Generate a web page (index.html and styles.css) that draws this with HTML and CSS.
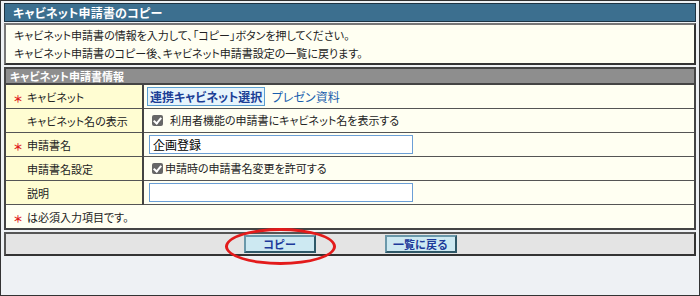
FILE: index.html
```html
<!DOCTYPE html>
<html lang="ja">
<head>
    <meta charset="UTF-8">
    <meta name="viewport" content="width=device-width, initial-scale=1.0">
    <title>キャビネット申請書のコピー</title>
    <link rel="stylesheet" href="styles.css">
</head>
<body>
    <div class="frame">
        <div class="title-bar">キャビネット申請書のコピー</div>
        <div class="desc">
            <p>キャビネット申請書の情報を入力して、「コピー」ボタンを押してください。</p>
            <p>キャビネット申請書のコピー後、キャビネット申請書設定の一覧に戻ります。</p>
        </div>
        <table class="form-table">
            <tr>
                <th class="section-head" colspan="2">キャビネット申請書情報</th>
            </tr>
            <tr>
                <td class="label"><span class="req">＊</span>キャビネット</td>
                <td class="value">
                    <span class="pick-btn">連携キャビネット選択</span>
                    <a class="link" href="#">プレゼン資料</a>
                </td>
            </tr>
            <tr>
                <td class="label"><span class="req"></span>キャビネット名の表示</td>
                <td class="value">
                    <label class="check"><span class="box"></span>利用者機能の申請書にキャビネット名を表示する</label>
                </td>
            </tr>
            <tr>
                <td class="label"><span class="req">＊</span>申請書名</td>
                <td class="value"><input class="text" type="text" value="企画登録"></td>
            </tr>
            <tr>
                <td class="label"><span class="req"></span>申請書名設定</td>
                <td class="value">
                    <label class="check tight"><span class="box"></span>申請時の申請書名変更を許可する</label>
                </td>
            </tr>
            <tr>
                <td class="label"><span class="req"></span>説明</td>
                <td class="value"><input class="text" type="text" value=""></td>
            </tr>
            <tr>
                <td class="note" colspan="2"><span class="req">＊</span>は必須入力項目です。</td>
            </tr>
        </table>
        <div class="btn-bar">
            <span class="btn-wrap">
                <button class="btn">コピー</button>
                <span class="ring"></span>
            </span>
            <button class="btn">一覧に戻る</button>
        </div>
    </div>
</body>
</html>
```

FILE: styles.css
```css
body {
    margin: 0;
    font-family: "Noto Sans CJK JP", "Liberation Sans", sans-serif;
    font-feature-settings: "palt";
    font-size: 11px;
    color: #222;
}
.frame {
    width: 700px;
    height: 296px;
    box-sizing: border-box;
    border: 1px solid #333;
    background: #eef1f4;
    padding: 2px 3px 0 3px;
}
.title-bar {
    height: 17px;
    line-height: 17px;
    background: #3c6f8f;
    border: 1px solid #1d3342;
    color: white;
    font-size: 12px;
    font-weight: bold;
    padding-left: 8px;
    letter-spacing: 0.2px;
}
.desc {
    margin-top: 1px;
    height: 37px;
    background: #fffff2;
    border: 2px solid #555;
    border-color: #777 #333 #333 #777;
    padding: 1px 0 0 8px;
}
.desc p {
    margin: 0;
    line-height: 18px;
}
.form-table {
    margin-top: 2px;
    width: 100%;
    border-collapse: collapse;
    background: #fffff2;
    border: 2px solid #444;
}
.section-head {
    height: 14px;
    padding: 0 0 0 4px;
    background: #8e8e8e;
    color: white;
    font-weight: bold;
    font-size: 11px;
    text-align: left;
    line-height: 14px;
    border-bottom: 2px solid #444;
}
.form-table td {
    border: 1px solid #555;
    height: 23px;
    padding: 0;
}
.label {
    width: 136px;
    background: #fffdd2;
    border-right: 2px solid #444 !important;
}
.req {
    display: inline-block;
    width: 21px;
    padding-left: 8px;
    box-sizing: border-box;
    color: #e02020;
    font-weight: bold;
    font-size: 10px;
    line-height: 11px;
    vertical-align: middle;
}
.value {
    padding-left: 3px !important;
}
.pick-btn {
    display: inline-block;
    padding: 0 2px;
    height: 17px;
    line-height: 17px;
    background: #e6f4fc;
    border: 1px solid #5a9ed0;
    color: #1c3f96;
    font-weight: bold;
    font-size: 12px;
}
.link {
    margin-left: 4px;
    color: #1a5fae;
    font-size: 12px;
    text-decoration: none;
}
.check {
    display: inline-flex;
    align-items: center;
    margin-left: 5px;
}
.box {
    position: relative;
    width: 11px;
    height: 11px;
    margin-right: 7px;
    background: #676767;
    border-radius: 2px;
}
.tight .box {
    margin-right: 2px;
}
.box::after {
    content: "";
    position: absolute;
    left: 3px;
    top: 1px;
    width: 3px;
    height: 6px;
    border: solid white;
    border-width: 0 2px 2px 0;
    transform: rotate(40deg);
}
.text {
    width: 264px;
    height: 19px;
    box-sizing: border-box;
    margin-left: 2px;
    border: 1px solid #6b9fd6;
    font-family: inherit;
    font-size: 12px;
    padding: 0 3px;
    vertical-align: middle;
}
.note {
    background: #fffff2;
}
.btn-bar {
    margin-top: 2px;
    height: 18px;
    padding: 1px 0;
    background: #e4e4e4;
    border: 2px solid #555;
    border-color: #555 #333 #333 #555;
    display: flex;
    justify-content: center;
    gap: 69px;
}
.btn-wrap {
    position: relative;
}
.btn {
    width: 72px;
    height: 18px;
    background: #cde9f2;
    border: 2px solid #3d6a7c;
    border-color: #6a98aa #2e5868 #2e5868 #6a98aa;
    color: #1d3a9a;
    font-family: inherit;
    font-weight: bold;
    font-size: 11px;
    padding: 0;
    line-height: 13px;
}
.ring {
    position: absolute;
    left: -19px;
    top: -7px;
    width: 111px;
    height: 37px;
    border: 3px solid #e31b1b;
    border-radius: 50%;
    box-sizing: border-box;
}
```
